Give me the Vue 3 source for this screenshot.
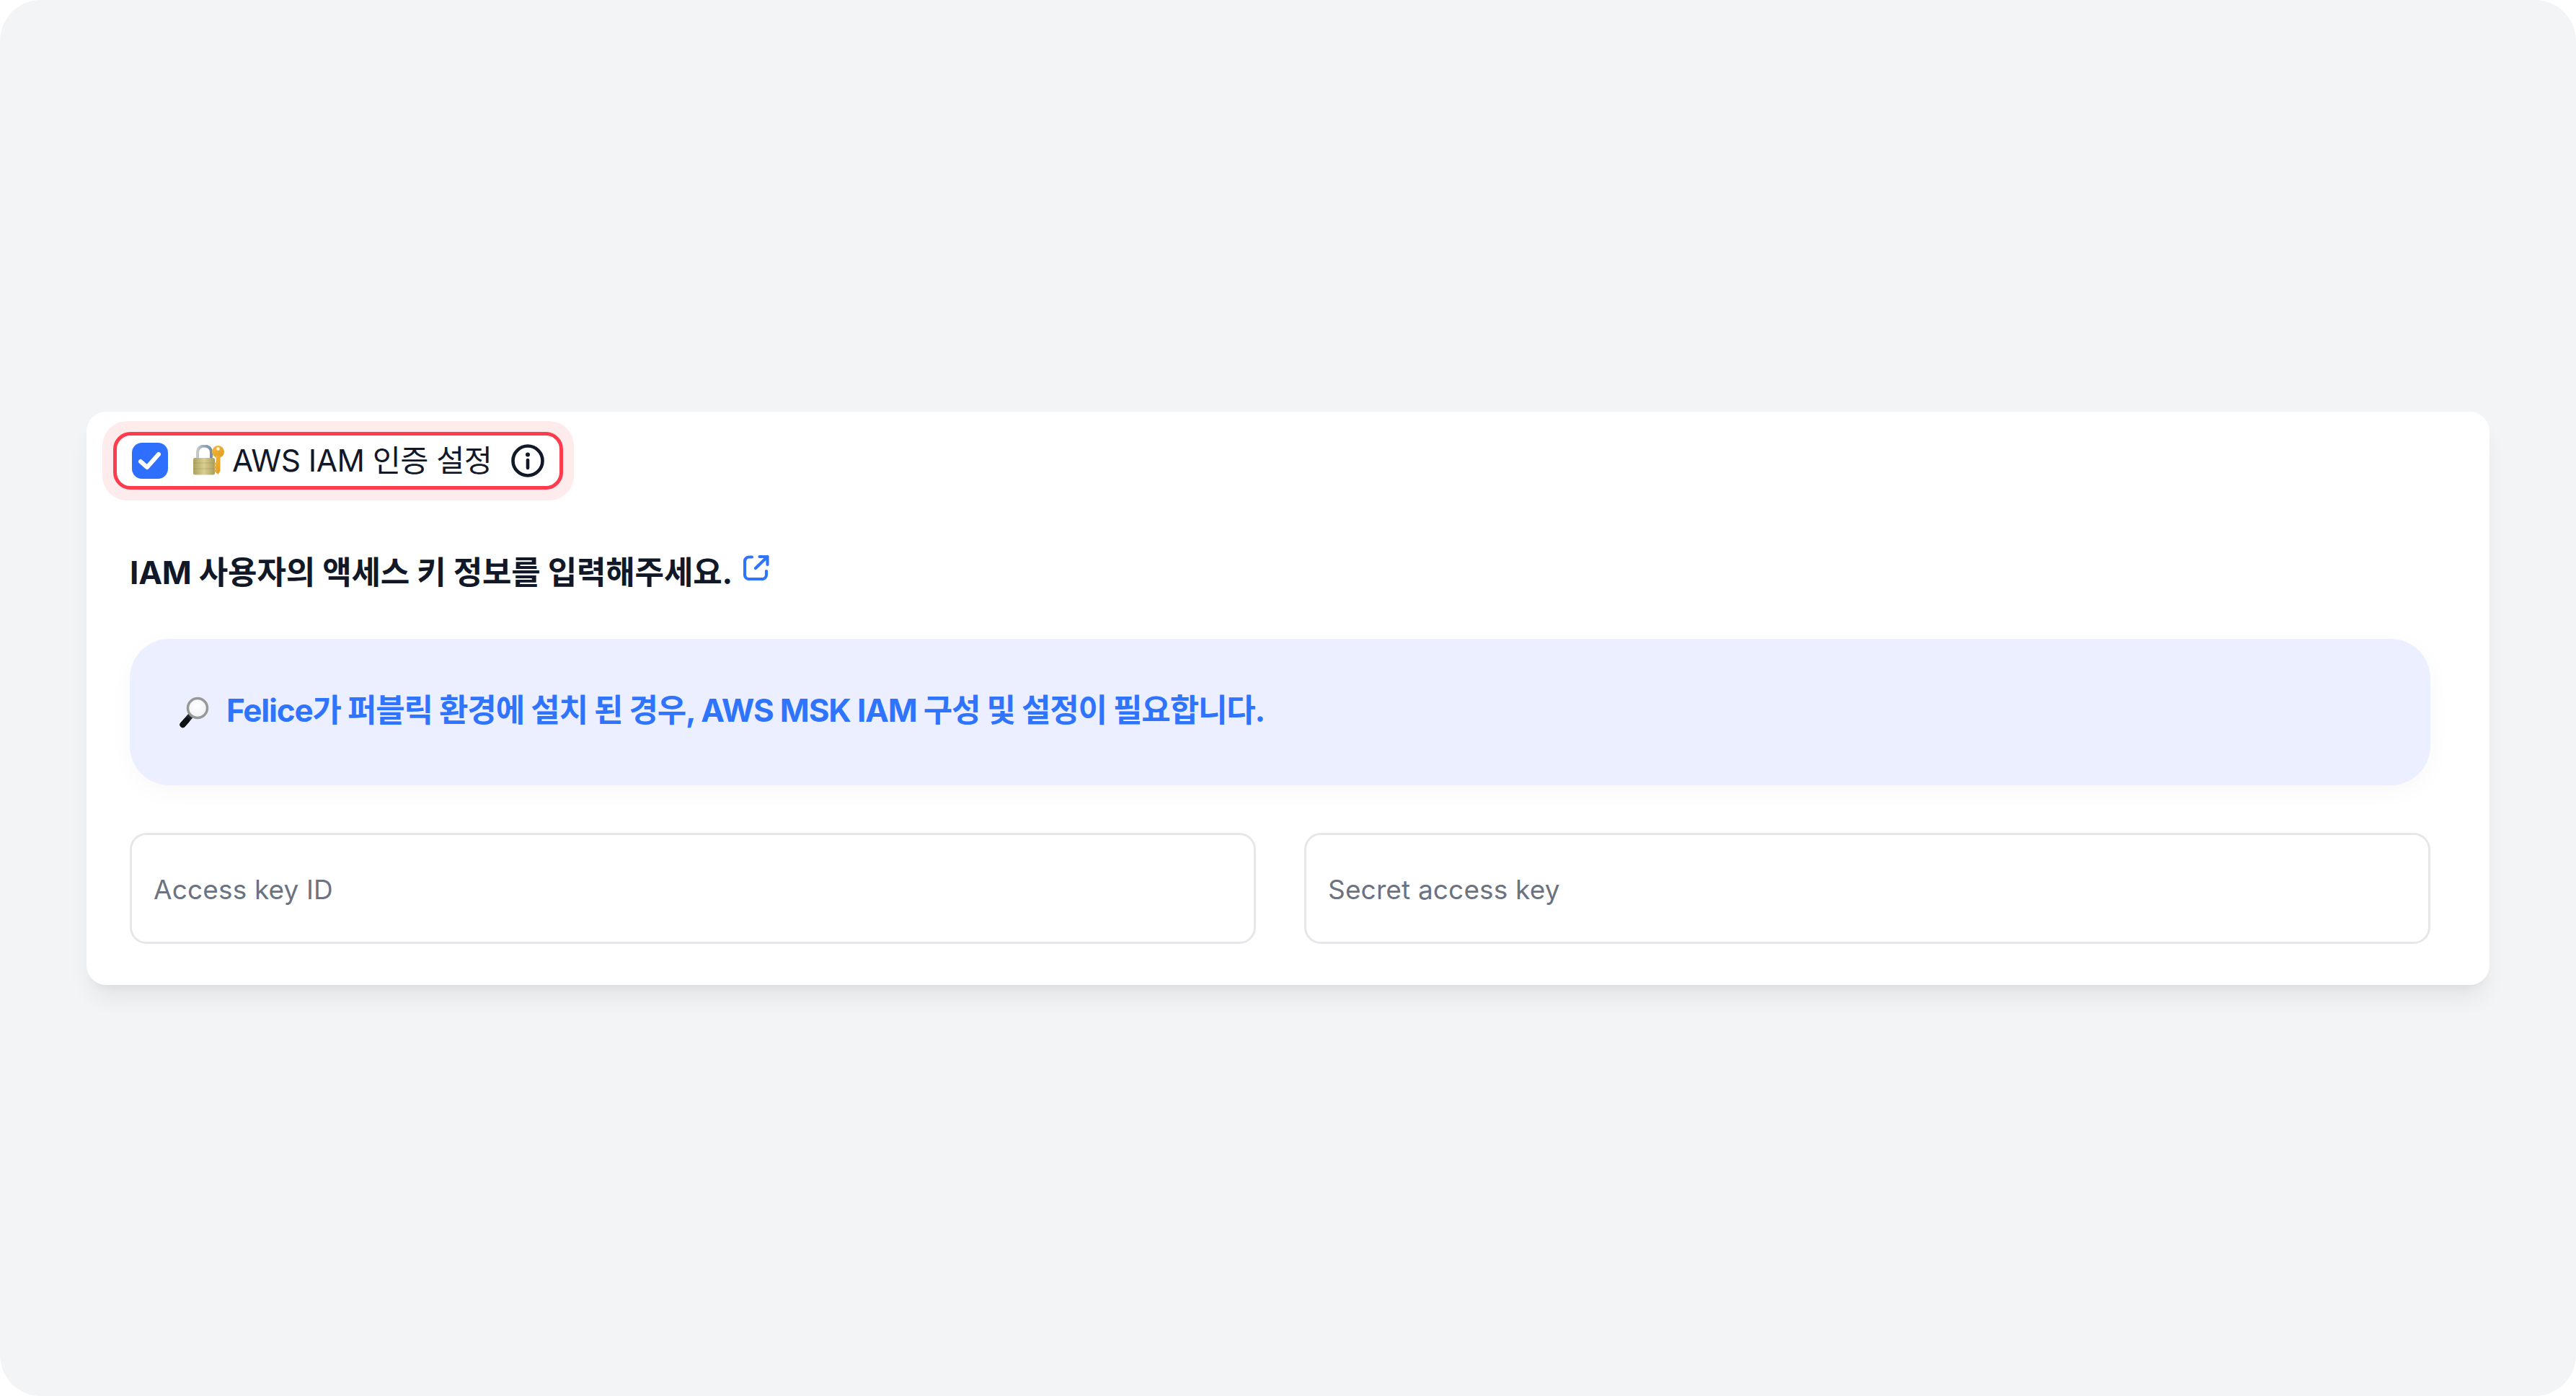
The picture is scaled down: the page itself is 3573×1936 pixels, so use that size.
<script setup>
const fields = ['Access key ID', 'Secret access key']
</script>

<template>
  <div class="page">
    <section class="card">
      <div class="halo">
        <div class="option">
          <span class="check">
            <svg viewBox="0 0 50 50" width="50" height="50"><path d="M12 26 L21 34 L37 16" fill="none" stroke="#fff" stroke-width="6" stroke-linecap="round" stroke-linejoin="round"/></svg>
          </span>
          <svg class="lock" viewBox="0 0 43 42" width="43" height="42">
            <defs>
              <linearGradient id="body" x1="0" y1="0" x2="1" y2="0"><stop offset="0" stop-color="#a9a15f"/><stop offset=".5" stop-color="#d9cf93"/><stop offset="1" stop-color="#a89d58"/></linearGradient>
              <linearGradient id="shackle" x1="0" y1="0" x2="1" y2="0"><stop offset="0" stop-color="#c4c8c6"/><stop offset=".5" stop-color="#8fa6bd"/><stop offset="1" stop-color="#7c8f9e"/></linearGradient>
              <linearGradient id="gold" x1="0" y1="0" x2="1" y2="1"><stop offset="0" stop-color="#f4bb3c"/><stop offset="1" stop-color="#de9a20"/></linearGradient>
            </defs>
            <path d="M6 20 V11 C6 4.500 10 1.500 15.500 1.500 C21 1.500 25 4.500 25 11 V20" fill="none" stroke="url(#shackle)" stroke-width="4"/>
            <rect x="0" y="18" width="30" height="23.500" rx="2.500" fill="url(#body)"/>
            <path d="M0 25 H30 M0 33 H30" stroke="#9c9152" stroke-width=".7" opacity=".55"/>
            <circle cx="34.500" cy="9.500" r="8.500" fill="url(#gold)"/>
            <path d="M31.500 15 H37.500 V36 L34.500 41 L31 38 L29 36 L31 33.500 L29 31 L31 28.500 L29 26 L31.500 24 Z" fill="url(#gold)"/>
            <circle cx="34.500" cy="5.500" r="2.300" fill="#fff6d8"/>
          </svg>
          <span class="option-label">AWS IAM 인증 설정</span>
          <svg class="info" viewBox="0 0 46 46" width="46" height="46">
            <circle cx="23" cy="23" r="20.500" fill="none" stroke="#111827" stroke-width="4.600"/>
            <circle cx="23" cy="14.500" r="3" fill="#111827"/>
            <path d="M23 22 V33" stroke="#111827" stroke-width="4.600" stroke-linecap="round"/>
          </svg>
        </div>
      </div>

      <h2 class="title">
        <span>IAM 사용자의 액세스 키 정보를 입력해주세요.</span>
        <svg class="link" viewBox="0 0 36 36" width="36" height="36">
          <path d="M12 3.500 H8 A6 6 0 0 0 2 9.500 V28 A6 6 0 0 0 8 34 H26 A6 6 0 0 0 32 28 V23" fill="none" stroke="#2e74ff" stroke-width="4.200" stroke-linecap="round"/>
          <path d="M17 19 L33.500 3 M22.500 3 H33.500 V14" fill="none" stroke="#2e74ff" stroke-width="4.200" stroke-linecap="round" stroke-linejoin="round"/>
        </svg>
      </h2>

      <div class="notice">
        <svg class="glass" viewBox="0 0 46 46" width="46" height="46">
          <defs>
            <radialGradient id="lens" cx=".45" cy=".4" r=".65"><stop offset="0" stop-color="#fff"/><stop offset=".8" stop-color="#f1f2f5"/><stop offset="1" stop-color="#d5d9df"/></radialGradient>
          </defs>
          <path d="M18 28 L7.500 40" stroke="#23272c" stroke-width="8" stroke-linecap="round"/>
          <path d="M13 34 L7.500 40" stroke="#0f1114" stroke-width="8" stroke-linecap="round"/>
          <circle cx="28" cy="17" r="13.500" fill="url(#lens)" stroke="#979996" stroke-width="3.500"/>
        </svg>
        <span class="notice-text">Felice가 퍼블릭 환경에 설치 된 경우, AWS MSK IAM 구성 및 설정이 필요합니다.</span>
      </div>

      <div class="fields">
        <div v-for="f in fields" :key="f" class="field">{{ f }}</div>
      </div>
    </section>
  </div>
</template>

<style scoped>
.page {
  box-sizing: border-box;
  width: 3573px;
  height: 1936px;
  padding: 571px 120px 0;
  background: #f3f4f6;
  border-radius: 57px;
  font-family: Inter, "Noto Sans CJK KR", sans-serif;
  color: #111827;
}
.card {
  box-sizing: border-box;
  height: 795px;
  padding: 13px 82px 0 60px;
  background: #fff;
  border-radius: 27px;
  box-shadow: 0 23px 34px -7px rgba(0, 0, 0, .07), 0 9px 14px -9px rgba(0, 0, 0, .07);
}
.halo {
  display: inline-flex;
  margin-left: -38px;
  padding: 15px;
  background: #feeced;
  border-radius: 34px;
}
.option {
  box-sizing: border-box;
  display: flex;
  align-items: center;
  height: 80px;
  padding: 0 21px;
  background: #fff;
  border: 5px solid #ff3b4e;
  border-radius: 24px;
}
.check {
  display: block;
  width: 50px;
  height: 50px;
  background: #2e6fff;
  border-radius: 14px;
}
.check svg { display: block; }
.lock { margin-left: 35px; margin-bottom: 2px; }
.option-label {
  margin-left: 11px;
  font-size: 42.500px;
  line-height: 50px;
  letter-spacing: -.55px;
  white-space: nowrap;
}
.info { margin-left: 27px; }
.title {
  display: flex;
  align-items: flex-start;
  margin: 67px 0 0;
  font-size: 44px;
  font-weight: 700;
  line-height: 66px;
  letter-spacing: -.2px;
  white-space: nowrap;
}
.link { margin: 8px 0 0 15px; }
.notice {
  display: flex;
  align-items: center;
  height: 203px;
  margin-top: 59px;
  padding: 0 0 0 66px;
  background: #ebefff;
  border-radius: 55px;
  box-shadow: 0 9px 34px rgba(0, 0, 0, .03);
}
.notice-text {
  margin: 0 0 11px 22px;
  font-size: 44px;
  font-weight: 700;
  letter-spacing: -1.200px;
  color: #2e74ff;
  white-space: nowrap;
}
.fields {
  display: grid;
  grid-template-columns: 1fr 1fr;
  gap: 67px;
  margin-top: 66px;
}
.field {
  box-sizing: border-box;
  display: flex;
  align-items: center;
  height: 154px;
  padding: 2px 30px 0;
  border: 3px solid #e5e7eb;
  border-radius: 23px;
  font-size: 37px;
  letter-spacing: .15px;
  color: #6b7280;
}
</style>
